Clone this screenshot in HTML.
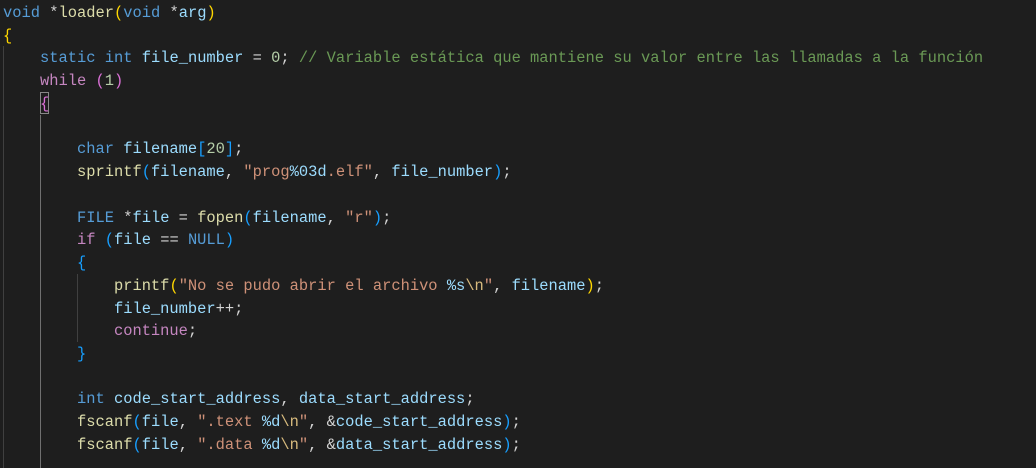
<!DOCTYPE html>
<html><head><style>
body{margin:0;background:#1e1e1e;width:1036px;height:468px;overflow:hidden;position:relative}
pre{margin:0;position:absolute;left:3px;top:2px;font-family:"Liberation Mono",monospace;font-size:15.42px;line-height:22.74px;color:#d4d4d4;white-space:pre}
.k{color:#569cd6}.c{color:#c586c0}.f{color:#dcdcaa}.v{color:#9cdcfe}.s{color:#ce9178}.n{color:#b5cea8}.m{color:#6a9955}
.b1{color:#ffd700}.b2{color:#da70d6}.b3{color:#179fff}.e{color:#d7ba7d}
.g{position:absolute;width:1px;background:#404040}
</style></head><body>
<div class="g" style="left:3px;top:46px;height:422px"></div>
<div class="g" style="left:40px;top:115px;height:353px;background:#707070"></div>
<div class="g" style="left:77px;top:274px;height:68px"></div>
<div style="position:absolute;left:40px;top:92px;width:9px;height:22px;border:1px solid #888;box-sizing:border-box"></div>
<pre><span class="k">void</span> *<span class="f">loader</span><span class="b1">(</span><span class="k">void</span> *<span class="v">arg</span><span class="b1">)</span>
<span class="b1">{</span>
    <span class="k">static</span> <span class="k">int</span> <span class="v">file_number</span> = <span class="n">0</span>; <span class="m">// Variable estática que mantiene su valor entre las llamadas a la función</span>
    <span class="c">while</span> <span class="b2">(</span><span class="n">1</span><span class="b2">)</span>
    <span class="b2">{</span>

        <span class="k">char</span> <span class="v">filename</span><span class="b3">[</span><span class="n">20</span><span class="b3">]</span>;
        <span class="f">sprintf</span><span class="b3">(</span><span class="v">filename</span>, <span class="s">"prog</span><span class="v">%03d</span><span class="s">.elf"</span>, <span class="v">file_number</span><span class="b3">)</span>;

        <span class="k">FILE</span> *<span class="v">file</span> = <span class="f">fopen</span><span class="b3">(</span><span class="v">filename</span>, <span class="s">"r"</span><span class="b3">)</span>;
        <span class="c">if</span> <span class="b3">(</span><span class="v">file</span> == <span class="k">NULL</span><span class="b3">)</span>
        <span class="b3">{</span>
            <span class="f">printf</span><span class="b1">(</span><span class="s">"No se pudo abrir el archivo </span><span class="v">%s</span><span class="e">\n</span><span class="s">"</span>, <span class="v">filename</span><span class="b1">)</span>;
            <span class="v">file_number</span>++;
            <span class="c">continue</span>;
        <span class="b3">}</span>

        <span class="k">int</span> <span class="v">code_start_address</span>, <span class="v">data_start_address</span>;
        <span class="f">fscanf</span><span class="b3">(</span><span class="v">file</span>, <span class="s">".text </span><span class="v">%d</span><span class="e">\n</span><span class="s">"</span>, &amp;<span class="v">code_start_address</span><span class="b3">)</span>;
        <span class="f">fscanf</span><span class="b3">(</span><span class="v">file</span>, <span class="s">".data </span><span class="v">%d</span><span class="e">\n</span><span class="s">"</span>, &amp;<span class="v">data_start_address</span><span class="b3">)</span>;
</pre>
</body></html>
